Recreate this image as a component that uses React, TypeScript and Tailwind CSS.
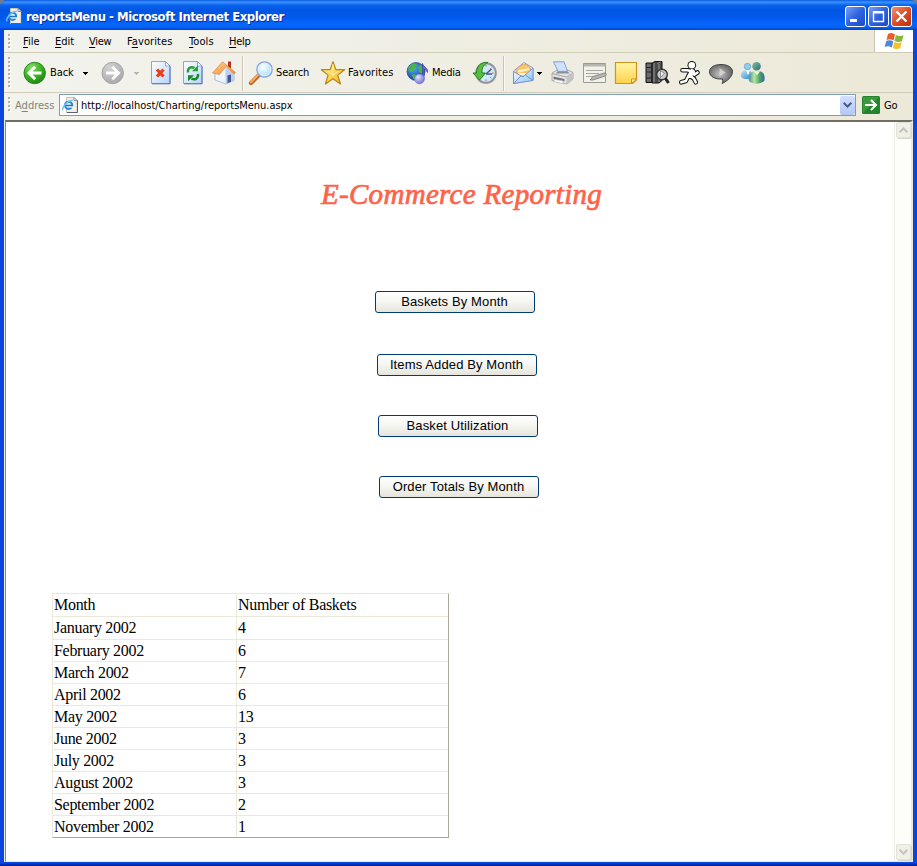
import type { ReactNode } from "react";

const ui = "font-['DejaVu_Sans_Condensed','DejaVu_Sans',sans-serif] [font-stretch:condensed]";

function Grip({ dots }: { dots: number }) {
  return (
    <svg className="shrink-0" width="4" height={dots * 4} shapeRendering="crispEdges">
      {Array.from({ length: dots }, (_, i) => (
        <g key={i}>
          <rect x="1" y={i * 4 + 1} width="2" height="2" fill="#fff" />
          <rect x="0" y={i * 4} width="2" height="2" fill="#b3b09f" />
        </g>
      ))}
    </svg>
  );
}

function IEPage() {
  return (
    <svg width="16" height="16" viewBox="0 0 16 16" className="shrink-0">
      <path d="M4.500 .5h7.500l3 3v12H4.500z" fill="#f1f0e6" stroke="#c9c6b4" />
      <path d="M12 .5v3h3z" fill="#fff" stroke="#66697a" strokeWidth=".7" />
      <path d="M15.500 3.500v12H5" fill="none" stroke="#5b6078" strokeWidth="1" />
      <circle cx="6.600" cy="8.300" r="3.600" fill="#e3f5fe" stroke="#2a86d6" strokeWidth="2.100" />
      <path d="M4 8.400h6.500" stroke="#1f74c8" strokeWidth="1.500" />
      <path d="M8.300 10h4" stroke="#f1f0e6" strokeWidth="1.500" />
      <path d="M1.200 13.200C-.8 11 4.500 4.200 10.800 3.200" fill="none" stroke="#6fc0f4" strokeWidth="1.300" />
    </svg>
  );
}

function Svg({ children, w = 24 }: { children: ReactNode; w?: number }) {
  return (
    <svg width={w} height="24" viewBox={`0 0 ${w} 24`} className="shrink-0 overflow-visible">
      {children}
    </svg>
  );
}

function Arrow({ green }: { green?: boolean }) {
  return (
    <Svg>
      <circle cx="11.700" cy="12" r="10.700" fill={green ? "url(#gGreen)" : "url(#gGray)"} stroke={green ? "#2d8a1d" : "#a5a5a5"} />
      <path
        d={green ? "M18.500 12H6.500M12.200 5.800L6 12l6.200 6.200" : "M5 12H17M11.300 5.800L17.500 12l-6.200 6.200"}
        fill="none"
        stroke="#fff"
        strokeWidth="2.900"
      />
    </Svg>
  );
}

function Caret({ className = "", faded }: { className?: string; faded?: boolean }) {
  return (
    <svg width="5" height="3" viewBox="0 0 5 3" shapeRendering="crispEdges" className={`shrink-0 ${className}`}>
      <path d="M0 0h5v1H4v1H3v1H2V2H1V1H0z" fill={faded ? "#b9b7a8" : "#000"} />
    </svg>
  );
}

function Sheet({ children }: { children: ReactNode }) {
  return (
    <Svg w={20}>
      <path d="M.5 .5h14l4.500 4.500V22.500H.5z" fill="url(#gSheet)" stroke="#8ba6d9" />
      <path d="M14.500 .5V5H19z" fill="#fff" stroke="#7d97c9" strokeWidth=".8" />
      <path d="M19 5.500v17.300H1" fill="none" stroke="#5572b0" />
      {children}
    </Svg>
  );
}

function Divider({ className }: { className: string }) {
  return <div className={`h-[35px] w-[2px] shrink-0 border-l border-r border-l-[#c9c5b0] border-r-[#fbfaf4] ${className}`} />;
}

function Gradients() {
  return (
    <svg width="0" height="0" className="absolute">
      <defs>
        <radialGradient id="gGreen" cx=".35" cy=".25" r=".85"><stop offset="0" stopColor="#83dd62" /><stop offset=".5" stopColor="#3eb526" /><stop offset="1" stopColor="#16800f" /></radialGradient>
        <radialGradient id="gGray" cx=".35" cy=".25" r=".85"><stop offset="0" stopColor="#d2d2d2" /><stop offset="1" stopColor="#a6a6a6" /></radialGradient>
        <linearGradient id="gSheet" x1="0" y1="0" x2="1" y2="1"><stop offset="0" stopColor="#fff" /><stop offset="1" stopColor="#b7d3fa" /></linearGradient>
        <linearGradient id="gRoof" x1="0" y1="0" x2="1" y2="1"><stop offset="0" stopColor="#ffd18a" /><stop offset="1" stopColor="#f0883a" /></linearGradient>
        <radialGradient id="gLens" cx=".4" cy=".35" r=".7"><stop offset="0" stopColor="#fff" /><stop offset="1" stopColor="#9fdbfa" /></radialGradient>
        <linearGradient id="gStar" x1="0" y1="0" x2="1" y2="1"><stop offset="0" stopColor="#fff7a0" /><stop offset="1" stopColor="#f7b416" /></linearGradient>
        <radialGradient id="gGlobe" cx=".35" cy=".3" r=".8"><stop offset="0" stopColor="#5da9f5" /><stop offset="1" stopColor="#0d2f9c" /></radialGradient>
        <radialGradient id="gNote" cx=".35" cy=".3" r=".8"><stop offset="0" stopColor="#e2e3ff" /><stop offset="1" stopColor="#6466cc" /></radialGradient>
        <linearGradient id="gMail" x1="0" y1="0" x2="1" y2="1"><stop offset="0" stopColor="#fff" /><stop offset="1" stopColor="#80c4fa" /></linearGradient>
        <linearGradient id="gYellow" x1="0" y1="0" x2="0" y2="1"><stop offset="0" stopColor="#fff6a6" /><stop offset="1" stopColor="#ffd24a" /></linearGradient>
        <radialGradient id="gBubble" cx=".45" cy=".5" r=".6"><stop offset="0" stopColor="#c2c2c2" /><stop offset="1" stopColor="#5c5c5c" /></radialGradient>
        <linearGradient id="gBuddy" x1="0" y1="0" x2="1" y2="0"><stop offset="0" stopColor="#3f8fa0" /><stop offset=".35" stopColor="#b7e6a0" /><stop offset=".7" stopColor="#4d9f66" /><stop offset="1" stopColor="#2c6ca8" /></linearGradient>
        <linearGradient id="gHead" x1="0" y1="0" x2="1" y2="1"><stop offset="0" stopColor="#7cc2a4" /><stop offset="1" stopColor="#2e6a78" /></linearGradient>
        <linearGradient id="gBlueBuddy" x1="0" y1="0" x2="1" y2="1"><stop offset="0" stopColor="#b5e4fb" /><stop offset="1" stopColor="#2d86cc" /></linearGradient>
      </defs>
    </svg>
  );
}

const runnerLimbs = "M3.500 9.300H8.500L13 10.500M14.500 10.500l.8 3.200 3.200-2.200M10.500 14.500l4.300 3 2 3.800M9.500 15l-2.700 5-4.500 1.300";
const runnerTorso = "M13 10.500L11 14.500";

function Toolbar() {
  return (
    <div className="flex h-[40px] shrink-0 items-center border-b border-[#d0ccb8] pt-px pl-[4px] text-[11px]">
      <Grip dots={8} />
      <div className="ml-[11px] flex"><Arrow green /></div>
      <span className="ml-[3px] w-[26px] whitespace-nowrap pt-px tracking-[-0.1px]">Back</span>
      <Caret className="ml-[7px]" />
      <div className="ml-[13px] flex"><Arrow /></div>
      <Caret faded className="ml-[9px]" />
      <div className="ml-[12px] flex">
        <Sheet><path d="M6 8.500l6.500 7M12.500 8.500l-6.500 7" stroke="#f03b13" strokeWidth="3.300" /></Sheet>
      </div>
      <div className="ml-[12px] flex">
        <Sheet>
          <path d="M5 11.500C4.500 7 8 5 11.500 7" fill="none" stroke="#1ba62c" strokeWidth="2.400" />
          <path d="M9 10.300h6V4.300z" fill="#1ba62c" />
          <path d="M15 13c.5 4.500-3 6.500-6.500 4.500" fill="none" stroke="#148a20" strokeWidth="2.400" />
          <path d="M11 14.200H5v6z" fill="#148a20" />
        </Sheet>
      </div>
      <div className="ml-[9px] flex">
        <Svg>
          <path d="M16 .5h3v7h-3z" fill="#b8321f" />
          <path d="M3 11L13 3l9 9v7.500l-8 3.500-11-4z" fill="#eef3fd" stroke="#9dafd4" strokeWidth=".8" />
          <path d="M13.500 6.500l8.500 6.500v6.500l-8.500 3.500z" fill="#bdcdec" />
          <path d="M10.500 .8L23.500 11.500l-1.700 1.500L14 5.500 7.500 13.500 .5 12z" fill="url(#gRoof)" stroke="#e08a3c" strokeWidth=".7" />
          <path d="M15.500 14.500l3.500-1v7.300l-3.500 1.400z" fill="#44558f" />
        </Svg>
      </div>
      <Divider className="ml-[6px]" />
      <div className="ml-[5px] flex">
        <Svg>
          <path d="M2 22L9.500 14.500" stroke="#b9682b" strokeWidth="4.200" strokeLinecap="round" />
          <path d="M2 21.200L9 14" stroke="#ffae5a" strokeWidth="2" strokeLinecap="round" />
          <circle cx="15.500" cy="8.500" r="7.700" fill="url(#gLens)" stroke="#8ea3da" strokeWidth="1.300" />
          <circle cx="15.500" cy="8.500" r="6.200" fill="none" stroke="#def3ff" />
        </Svg>
      </div>
      <span className="ml-[3px] w-[44px] whitespace-nowrap pt-px tracking-[-0.15px]">Search</span>
      <div className="ml-[1px] flex">
        <Svg>
          <path d="M12 .7l2.900 7.900 8.700.1-6.900 5.400 2.800 8.900-7.500-5.200L4.500 23l2.500-8.900L.4 8.700l8.700-.1z" fill="url(#gStar)" stroke="#bd8417" strokeWidth="1.200" strokeLinejoin="round" />
          <path d="M12 3v12M7 10l5 4 6-4" fill="none" stroke="#fffbd0" strokeWidth="1" opacity=".7" />
        </Svg>
      </div>
      <span className="ml-[3px] w-[57px] whitespace-nowrap pt-px tracking-[0.1px]">Favorites</span>
      <div className="ml-[1px] flex">
        <Svg>
          <circle cx="10" cy="10.500" r="9" fill="url(#gGlobe)" stroke="#1b3e99" strokeWidth=".7" />
          <path d="M2.500 6c3-4 6-4 8-3 1 2-2 3-2 5s-2 3-4 3-2-3-2-5zM12.500 5l3-1 2 5-1 3c-3 1-4-2-4-4zM5.500 14l3-1 3 3-1 3-3-1z" fill="#45b649" />
          <path d="M16.500 18V2.500c1 4 6 4 5 9-1-2.500-2.500-3-3.500-3v10z" fill="#6468ca" stroke="#4548a6" strokeWidth=".8" />
          <circle cx="13.500" cy="18" r="4.900" fill="url(#gNote)" stroke="#7c7ed0" strokeWidth=".6" />
        </Svg>
      </div>
      <span className="ml-[2px] w-[38px] whitespace-nowrap pt-px tracking-[-0.25px]">Media</span>
      <div className="ml-[3px] flex">
        <Svg>
          <circle cx="13" cy="12" r="9.800" fill="#cfe9fb" stroke="#8f969d" strokeWidth="2" />
          <path d="M13 4v1.500M20.500 12H19M13 18.500V20M18.300 6.700l-1 1M18.300 17.300l-1-1M7.700 17.300l1-1" stroke="#e6502e" />
          <path d="M13 13l5.500-5M13 13h6" stroke="#37608f" strokeWidth="1.500" />
          <path d="M15 1.500C9 .5 3.500 4 3.500 12H0l6.500 7 6-7H9C8.500 6.500 11 3.500 15 1.500z" fill="#58bd3c" stroke="#268120" />
        </Svg>
      </div>
      <Divider className="ml-[6px]" />
      <div className="ml-[7px] flex">
        <Svg>
          <path d="M1.500 10L12 1.500 21 7v12L1.500 22.500z" fill="#dceeff" stroke="#9a9cd6" />
          <path d="M4 12c-1-7 12-13 14.500-4l.5 6-8 2z" fill="#fcc568" stroke="#d59744" strokeWidth=".7" />
          <path d="M6 10.500l11-2.500M6 13h11" stroke="#fff5cf" strokeWidth="2.200" />
          <path d="M1.500 10.500l9.500 5.500 10-9v12.500l-19.500 3z" fill="url(#gMail)" stroke="#7e8fd0" />
          <path d="M1.500 22.500L9 15M21 19.500L13.500 14" stroke="#7e8fd0" />
        </Svg>
      </div>
      <Caret className="ml-[1px]" />
      <div className="ml-[9px] flex">
        <Svg>
          <path d="M1 12l6-3.500h9l6 3v6.500l-6 5L1 19.500z" fill="#e4e4e4" stroke="#a5a5a5" strokeWidth=".9" />
          <path d="M2.500 .8h10.500l3.500 9.500H7z" fill="#cfe3ff" stroke="#7f9fd7" />
          <path d="M6 10.500h11l1.500 2H5z" fill="#8f9094" />
          <path d="M1 12.500l14.500 3.500 6.500-4" fill="none" stroke="#a5a5a5" />
          <path d="M2.500 15.500l11 2.500v2.500l-11-2.500z" fill="#77797d" />
          <path d="M3.500 18.500l9 1.500-1 2.500-9-2z" fill="#fff" stroke="#aaa" strokeWidth=".6" />
          <path d="M15.500 16v7l6.500-5v-6z" fill="#c4c4c6" />
        </Svg>
      </div>
      <div className="ml-[8px] flex">
        <Svg>
          <path d="M.5 2.500h22v19H.5z" fill="#f1f0e9" stroke="#9b9a94" />
          <path d="M1 3h21.500v2.500H1z" fill="#b7b6ae" />
          <path d="M3 9.500h17M3 12.500h13M3 15.500h7" stroke="#aaa9a1" />
          <path d="M7 19l3-3.500 11-3.500c3-.5 3 2.500.500 3.200L10 19z" fill="#b8b8b2" stroke="#777" strokeWidth=".8" />
        </Svg>
      </div>
      <div className="ml-[8px] flex">
        <Svg>
          <path d="M.5 1.500h21v17.500l-4 3.500H.5z" fill="url(#gYellow)" stroke="#cd941d" strokeWidth="1.200" />
          <path d="M21.500 18h-5v4.500z" fill="#fff2a8" stroke="#cd941d" />
        </Svg>
      </div>
      <div className="ml-[6px] flex">
        <Svg w={25}>
          <path d="M1 2h6v19.500H1z" fill="#6a6a6a" stroke="#111" />
          <path d="M7 2l3-1.500h7v19l-3 2.500H7z" fill="#4a4a4a" stroke="#111" />
          <path d="M2 6.500h4M2 11h4M2 17h4" stroke="#222" />
          <path d="M9 2v19.500M12.500 2.500l3-1.500M14 3v18" stroke="#999" />
          <circle cx="17" cy="13.500" r="5.300" fill="#c9c9c9" stroke="#333" strokeWidth="1.400" />
          <path d="M15.500 10l4 2-4 4.500z" stroke="#777" strokeWidth=".8" fill="#f5f5f5" />
          <path d="M20.500 17.500L23.500 22" stroke="#222" strokeWidth="3" />
        </Svg>
      </div>
      <div className="ml-[9px] flex">
        <Svg w={21}>
          <g fill="none" strokeLinecap="round" strokeLinejoin="round">
            <circle cx="12.800" cy="4.300" r="4.300" fill="#111" />
            <path d={runnerLimbs} stroke="#111" strokeWidth="4.600" />
            <path d={runnerTorso} stroke="#111" strokeWidth="6.800" />
            <path d={runnerLimbs} stroke="#fff" strokeWidth="2.600" />
            <path d={runnerTorso} stroke="#fff" strokeWidth="4.800" />
            <circle cx="12.800" cy="4.300" r="3.300" fill="#fff" />
          </g>
        </Svg>
      </div>
      <div className="ml-[9px] flex">
        <Svg>
          <path d="M12 3.500c6.500 0 11.500 2.800 11.500 7 0 5-5 9.500-10.500 12 .8-1.500 1-3 .5-4.500C6 18.500.5 15.500.5 10.800.5 6.300 5.500 3.500 12 3.500z" fill="url(#gBubble)" stroke="#3f3f3f" />
          <path d="M10.500 7l6 4.500-6 4z" fill="#dadada" opacity=".8" />
        </Svg>
      </div>
      <div className="ml-[8px] flex">
        <Svg>
          <circle cx="6.500" cy="5.500" r="3.200" fill="#8fd0ee" stroke="#5c9ac3" strokeWidth=".7" />
          <path d="M0 14.500c0-3.500 2-5 4-5h5l3 4.500-3 4C4 18.500 0 17.500 0 14.500z" fill="url(#gBlueBuddy)" />
          <path d="M5 9.200l2 5 2-5z" fill="#fff" />
          <circle cx="15.500" cy="5.300" r="4.300" fill="url(#gHead)" />
          <path d="M8 20c-1-5 1-9.500 5.500-9.800h5c4 .3 6 4.800 4.800 9.800-4 3.500-12 3.500-15.300 0z" fill="url(#gBuddy)" />
          <path d="M13 10.200l3 4 3-4z" fill="#eafad8" />
        </Svg>
      </div>
    </div>
  );
}

function CaptionButton({ red, children }: { red?: boolean; children: ReactNode }) {
  return (
    <div
      className={`h-[21px] w-[21px] shrink-0 rounded-[3px] border border-white ${
        red ? "bg-linear-to-br from-[#f0906f] via-[#dd4c25] to-[#bd2f0c]" : "bg-linear-to-br from-[#7ba0f3] via-[#2e62e0] to-[#1c49c6]"
      }`}
    >
      <svg width="19" height="19" viewBox="0 0 19 19">{children}</svg>
    </div>
  );
}

function WindowsFlag() {
  return (
    <svg width="20" height="18" viewBox="0 0 20 18">
      <path d="M4 2c3-2 5-1 7 .5L9.500 8.500C7 7 5 7 2.500 8z" fill="#ee5b24" />
      <path d="M12 3c2 1 4 1.500 7.500.3L18 9.300c-3 1.200-5 1-7.500-.3z" fill="#84b93c" />
      <path d="M2.200 9C5 7.800 7 8 9.300 9.500l-1.500 6C5 14 3.500 14 .7 15z" fill="#4c87dc" />
      <path d="M10.300 10c2 1 4 1.500 7.400.3l-1.500 6c-3 1.200-5 1-7.400-.3z" fill="#f9c128" />
    </svg>
  );
}

function ScrollArrow({ down }: { down?: boolean }) {
  return (
    <div className="flex h-[16px] w-[15px] items-center justify-center rounded-[2px] border border-[#e4e3da] bg-[#f0efe8] shadow-[1px_1px_0_#d8d7cc]">
      <svg width="9" height="6" viewBox="0 0 9 6">
        <path d={down ? "M.7.8L4.500 4.600 8.300.8" : "M.7 5.200L4.500 1.400 8.300 5.200"} fill="none" stroke="#c4c3b9" strokeWidth="2" />
      </svg>
    </div>
  );
}

const menus: [string, string, string, string][] = [
  ["", "F", "ile", "w-[32px]"],
  ["", "E", "dit", "w-[34px]"],
  ["", "V", "iew", "w-[38px] tracking-[-0.3px]"],
  ["F", "a", "vorites", "w-[62px] tracking-[0.1px]"],
  ["", "T", "ools", "w-[40px] tracking-[0.1px]"],
  ["", "H", "elp", "w-[40px] tracking-[-0.3px]"],
];

const reports: [string, string, string][] = [
  ["Baskets By Month", "ml-[369px]", "mb-[41px]"],
  ["Items Added By Month", "ml-[371px]", "mb-[39px]"],
  ["Basket Utilization", "ml-[372px]", "mb-[39px]"],
  ["Order Totals By Month", "ml-[373px]", "mb-[95px]"],
];

const rows: [string, string, string][] = [
  ["Month", "Number of Baskets", "h-[23px]"],
  ["January 2002", "4", "h-[23px]"],
  ["February 2002", "6", "h-[22px]"],
  ["March 2002", "7", "h-[22px]"],
  ["April 2002", "6", "h-[22px]"],
  ["May 2002", "13", "h-[22px]"],
  ["June 2002", "3", "h-[22px]"],
  ["July 2002", "3", "h-[22px]"],
  ["August 2002", "3", "h-[22px]"],
  ["September 2002", "2", "h-[22px]"],
  ["November 2002", "1", "h-[21px]"],
];

export default function App() {
  return (
    <div className="h-[866px] w-[917px] overflow-hidden bg-[#7a7c84]">
      <Gradients />
      <div className={`flex h-[866px] w-[917px] flex-col overflow-hidden rounded-t-[7px] bg-[#0846dd] text-black ${ui}`}>
        <div className="flex h-[30px] shrink-0 items-center bg-[linear-gradient(180deg,#0a5be0_0%,#3c93ff_7%,#0a63ee_17%,#0055e2_35%,#0359ee_60%,#0667fd_82%,#0560f2_92%,#0042c4_100%)] pr-[5px] pl-[6px] pt-[3px]">
          <div className="mb-[2px] flex"><IEPage /></div>
          <span className="ml-[4px] grow pt-px whitespace-nowrap text-[13px] font-bold tracking-[-0.47px] text-white [text-shadow:1px_1px_0_#0a2f92]">
            reportsMenu - Microsoft Internet Explorer
          </span>
          <div className="flex gap-[2px]">
            <CaptionButton><path d="M4 12h7v3H4z" fill="#fff" /></CaptionButton>
            <CaptionButton><path d="M4.500 5h10v9.500h-10zM4 5h11" fill="none" stroke="#fff" strokeWidth="1.400" /><path d="M4 4h11v2.500H4z" fill="#fff" /></CaptionButton>
            <CaptionButton red><path d="M4.500 4.500l10 10M14.500 4.500l-10 10" stroke="#fff" strokeWidth="2.300" /></CaptionButton>
          </div>
        </div>

        <div className="flex h-[832px] shrink-0 flex-col border-x-4 border-x-[#0846dd] bg-linear-to-r from-[#f3f3ee] to-[#ece9d8]">
          <div className="flex h-[23px] shrink-0 border-b border-[#d0ccb8] text-[11px]">
            <div className="flex grow items-center pt-px pl-[4px]">
              <Grip dots={4} />
              <div className="ml-[11px] flex pt-[2px]">
                {menus.map(([pre, key, post, width]) => (
                  <span key={key + post} className={`whitespace-nowrap ${width}`}>
                    {pre}<u className="underline-offset-[2px]">{key}</u>{post}
                  </span>
                ))}
              </div>
            </div>
            <div className="flex w-[39px] items-center justify-center border-l border-[#c9c5b0] bg-white">
              <WindowsFlag />
            </div>
          </div>

          <Toolbar />

          <div className="flex h-[24px] shrink-0 items-center pl-[4px] text-[11px]">
            <Grip dots={4} />
            <span className="ml-[3px] w-[44px] whitespace-nowrap pt-[2px] text-[#848278]">A<u className="underline-offset-[2px]">d</u>dress</span>
            <div className="flex h-[22px] w-[797px] shrink-0 items-center border border-[#7f9db9] bg-white pl-[2px]">
              <IEPage />
              <span className="ml-[3px] grow whitespace-nowrap pt-[3px] tracking-[-0.03px]">http://localhost/Charting/reportsMenu.aspx</span>
              <div className="flex h-[19px] w-[15px] items-center justify-center rounded-[2px] bg-linear-to-b from-[#d3e0fe] to-[#b3c8f6]">
                <svg width="9" height="6" viewBox="0 0 9 6"><path d="M.7.8L4.500 4.600 8.300.8" fill="none" stroke="#435c8c" strokeWidth="2" /></svg>
              </div>
            </div>
            <svg width="18" height="18" viewBox="0 0 18 18" className="ml-[6px] shrink-0">
              <rect width="18" height="18" rx="1.500" fill="#23842b" />
              <path d="M1 1h16L1 17z" fill="#4ca64f" opacity=".6" />
              <path d="M3 9h11M9 4l5 5-5 5" fill="none" stroke="#fff" strokeWidth="2" />
            </svg>
            <span className="ml-[4px] pt-[2px] tracking-[-0.2px]">Go</span>
          </div>

          <div className="mt-[3px] ml-px flex h-[742px] shrink-0 border-t-2 border-r-2 border-b border-l border-t-[#716f64] border-r-[#ece9d8] border-b-[#ece9d8] border-l-[#8b897d] bg-white">
            <div className="flex grow flex-col">
              <h1 className="mt-[53px] ml-[315px] h-[38px] whitespace-nowrap font-['Monotype_Corsiva','Liberation_Serif','Times_New_Roman',serif] text-[29px] leading-[38px] tracking-[0.3px] italic text-[#ff6347] [-webkit-text-stroke:0.7px_#ff6347]">
                E-Commerce Reporting
              </h1>
              <div className="mt-[78px] flex flex-col">
                {reports.map(([label, left, gap]) => (
                  <button
                    key={label}
                    className={`flex h-[22px] w-[160px] shrink-0 items-center justify-center rounded-[3px] border border-[#003c74] bg-linear-to-b from-white via-[#f5f5f1] to-[#e6e5dc] pr-px pb-px font-['Liberation_Sans',Arial,sans-serif] text-[13px] whitespace-nowrap tracking-[0.12px] ${left} ${gap}`}
                  >
                    {label}
                  </button>
                ))}
              </div>
              <div className="ml-[46px] flex w-[397px] flex-col border border-t-[#ece9d8] border-r-[#aca899] border-b-[#aca899] border-l-[#ece9d8] font-['Liberation_Serif','Times_New_Roman',serif] text-[16px] leading-[22px] tracking-[-0.3px]">
                {rows.map(([month, count, height], i) => (
                  <div key={month} className={`flex shrink-0 ${height} ${i < rows.length - 1 ? "border-b border-[#ece9d8]" : ""}`}>
                    <span className="w-[184px] border-r border-[#ece9d8] pl-px">{month}</span>
                    <span className="pl-px">{count}</span>
                  </div>
                ))}
              </div>
            </div>
            <div className="flex w-[17px] shrink-0 flex-col items-center justify-between border-l border-[#eeede5] bg-[#fdfdfa] pb-px">
              <ScrollArrow />
              <ScrollArrow down />
            </div>
          </div>
        </div>
        <div className="h-[4px] shrink-0 bg-linear-to-b from-[#0a50ee] to-[#001b96]" />
      </div>
    </div>
  );
}
